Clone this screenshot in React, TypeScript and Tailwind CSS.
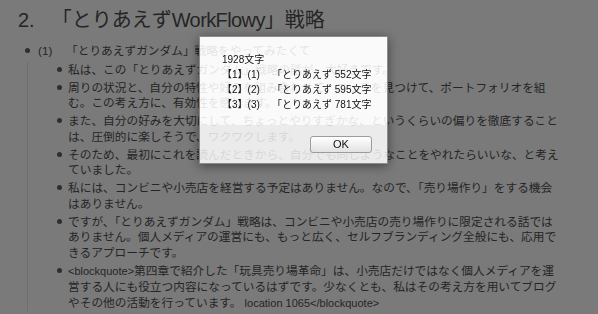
import React from 'react';

const FONT = { fontFamily: '"Liberation Sans", "Noto Sans CJK JP", sans-serif' };

type Item = { lines: React.ReactNode[] };

const items: Item[] = [
  { lines: ['私は、この「とりあえずガンダム」戦略の話が、大好きです。'] },
  {
    lines: [
      '周りの状況と、自分の特性や好みを組み合わせて、ニッチを見つけて、ポートフォリオを組',
      'む。この考え方に、有効性を感じます。',
    ],
  },
  {
    lines: [
      'また、自分の好みを大切にして、ちょっとやりすぎかな、というくらいの偏りを徹底すること',
      'は、圧倒的に楽しそうで、ワクワクします。',
    ],
  },
  {
    lines: [
      'そのため、最初にこれを読んだときから、自分でも同じようなことをやれたらいいな、と考え',
      'ていました。',
    ],
  },
  {
    lines: [
      '私には、コンビニや小売店を経営する予定はありません。なので、「売り場作り」をする機会',
      'はありません。',
    ],
  },
  {
    lines: [
      'ですが、「とりあえずガンダム」戦略は、コンビニや小売店の売り場作りに限定される話では',
      'ありません。個人メディアの運営にも、もっと広く、セルフブランディング全般にも、応用で',
      'きるアプローチです。',
    ],
  },
  {
    lines: [
      <>
        <span className="text-[11px]">&lt;blockquote&gt;</span>第四章で紹介した「玩具売り場革命」は、小売店だけではなく個人メディアを運
      </>,
      '営する人にも役立つ内容になっているはずです。少なくとも、私はその考え方を用いてブログ',
      <>
        やその他の活動を行っています。<span className="text-[11px]"> location 1065&lt;/blockquote&gt;</span>
      </>,
    ],
  },
];

const rows = [
  ['【1】(1)', '「とりあえず 552文字'],
  ['【2】(2)', '「とりあえず 595文字'],
  ['【3】(3)', '「とりあえず 781文字'],
];

const Dot = () => <span className="block h-[5px] w-[5px] shrink-0 rounded-full bg-[#2e2e2e]" />;

const App = () => {
  return (
    <div className="relative h-[314px] w-[598px] overflow-hidden bg-[#7a7a7a] text-[#252525]" style={FONT}>
      <div className="flex h-[26px] items-center pl-[18px] pt-[14px] text-[20px]">
        <span>2.</span>
        <span className="ml-[17px]">
          「とりあえず<span className="tracking-[-0.6px]">WorkFlowy</span>」戦略
        </span>
      </div>

      <div className="mt-[17px] text-[11.7px] leading-[15.5px]">
        <div className="flex items-center pl-[25px]">
          <Dot />
          <span className="ml-[8px] w-[28px]">(1)</span>
          <span className="whitespace-nowrap">「とりあえずガンダム」戦略をやってみたくて</span>
        </div>

        <div className="ml-[27px] mt-[3px] border-l border-[#6e6e6e] pl-[29px]">
          {items.map((item, i) => (
            <div key={i} className="mb-[2.5px] flex">
              <div className="w-[11px] shrink-0 pt-[5.25px]">
                <Dot />
              </div>
              <div>
                {item.lines.map((line, j) => (
                  <div key={j} className="whitespace-nowrap">
                    {line}
                  </div>
                ))}
              </div>
            </div>
          ))}
        </div>
      </div>

      {/* alert dialog */}
      <div className="absolute left-[199px] top-[36px] flex h-[128px] w-[189px] flex-col overflow-hidden border border-[#8c8c8c] shadow-[0_2px_10px_rgba(0,0,0,0.45)] backdrop-brightness-200">
        <div className="flex-1 bg-[#fafafa]/[0.87] pl-[22px] pt-[15px] text-[10px] leading-[15px] text-[#111]">
          <div>1928文字</div>
          {rows.map(([a, b]) => (
            <div key={a} className="flex whitespace-nowrap">
              <span className="w-[50px]">{a}</span>
              <span>{b}</span>
            </div>
          ))}
        </div>
        <div className="flex h-[38px] items-center justify-end bg-[#e9e9e9]/[0.88] pr-[15px]">
          <button className="flex h-[17px] w-[62px] items-center justify-center rounded-[3px] border border-[#9c9c9c] bg-gradient-to-b from-white to-[#e2e2e2] text-[11px] text-[#111]">
            OK
          </button>
        </div>
      </div>
    </div>
  );
};

export default App;
